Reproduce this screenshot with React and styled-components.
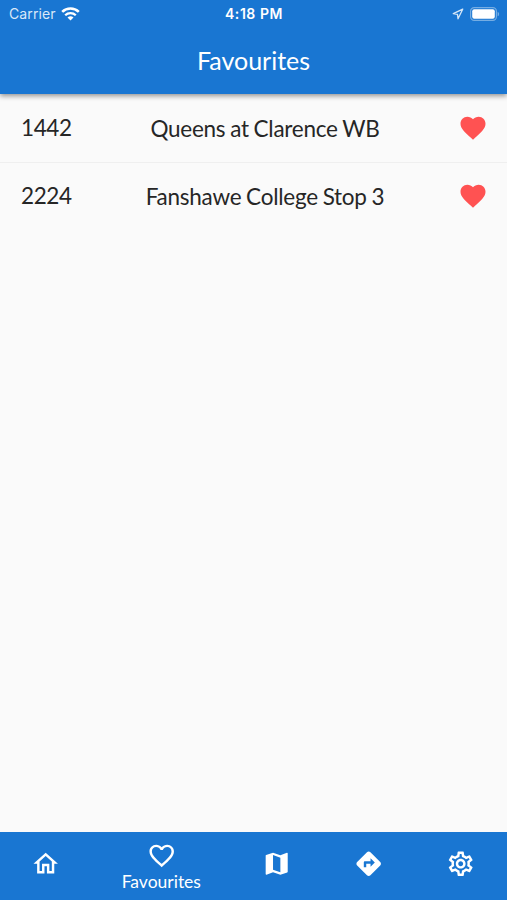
import React from "react";
import styled, { createGlobalStyle } from "styled-components";
import {
  MdDirections,
  MdFavorite,
  MdFavoriteBorder,
  MdMap,
  MdOutlineHome,
  MdOutlineSettings,
} from "react-icons/md";

const stops = [
  { number: "1442", name: "Queens at Clarence WB" },
  { number: "2224", name: "Fanshawe College Stop 3" },
];

const tabs = [
  { id: "home", icon: MdOutlineHome },
  { id: "favourites", icon: MdFavoriteBorder, label: "Favourites" },
  { id: "map", icon: MdMap },
  { id: "directions", icon: MdDirections },
  { id: "settings", icon: MdOutlineSettings },
];

const WifiIcon = () => (
  <svg width="19" height="14" viewBox="0 0 19 14" fill="none">
    <path d="M1.2 4.9a12 12 0 0 1 16.6 0" stroke="#fff" strokeWidth="2.6" />
    <path d="M4.2 8.2a7.6 7.6 0 0 1 10.6 0" stroke="#fff" strokeWidth="2.3" />
    <path d="M6.5 10.6a4.3 4.3 0 0 1 6 0l-3 3z" fill="#fff" />
  </svg>
);

const LocationIcon = () => (
  <svg width="12" height="12" viewBox="0 0 12 12" fill="none">
    <path
      d="M10.7 1.2 1.3 5.7l4.2.7.5 4.4z"
      stroke="#d5e6f7"
      strokeWidth="1.3"
      strokeLinejoin="round"
    />
  </svg>
);

const BatteryIcon = () => (
  <svg width="30" height="14" viewBox="0 0 30 14">
    <rect x="0.6" y="0.6" width="25.8" height="12.8" rx="3.6" fill="none" stroke="#75ade3" strokeWidth="1.2" />
    <rect x="2.2" y="2.2" width="22.6" height="9.6" rx="2" fill="#fff" />
    <path d="M27.6 4.7c2 .8 2 3.8 0 4.6z" fill="#75ade3" />
  </svg>
);

const App = () => {
  return (
    <Screen>
      <GlobalStyle />
      <Header>
        <StatusBar>
          <Carrier>
            Carrier
            <WifiIcon />
          </Carrier>
          <Clock>4:18 PM</Clock>
          <StatusIcons>
            <LocationIcon />
            <BatteryIcon />
          </StatusIcons>
        </StatusBar>
        <Title>Favourites</Title>
      </Header>
      <StopList>
        {stops.map((stop) => (
          <StopRow key={stop.number}>
            <StopNumber>{stop.number}</StopNumber>
            <StopName>{stop.name}</StopName>
            <HeartButton aria-label="Remove favourite">
              <MdFavorite size={30} />
            </HeartButton>
          </StopRow>
        ))}
      </StopList>
      <NavBar>
        {tabs.map(({ id, icon: Icon, label }) => (
          <NavItem key={id} $active={Boolean(label)}>
            <Icon size={29.4} />
            {label && <NavLabel>{label}</NavLabel>}
          </NavItem>
        ))}
      </NavBar>
    </Screen>
  );
};

const GlobalStyle = createGlobalStyle`
  * {
    box-sizing: border-box;
  }
  body {
    margin: 0;
  }
  svg {
    display: block;
    flex-shrink: 0;
  }
`;

const Screen = styled.div`
  display: flex;
  flex-direction: column;
  width: 507px;
  height: 900px;
  overflow: hidden;
  background: #fafafa;
  font-family: Lato, sans-serif;
`;

const Header = styled.header`
  z-index: 1;
  height: 93.5px;
  background: #1976d2;
  color: #fff;
  box-shadow: 0 2px 5px rgba(0, 0, 0, 0.42);
`;

const StatusBar = styled.div`
  display: grid;
  grid-template-columns: 1fr auto 1fr;
  align-items: center;
  height: 26px;
  padding: 1px 7px 0 9px;
  font-family: Inter, sans-serif;
  font-size: 14px;
`;

const Carrier = styled.div`
  display: flex;
  align-items: center;
  gap: 5px;
  color: #d9e8f8;
  letter-spacing: 0.1px;
`;

const Clock = styled.div`
  margin-left: -1px;
  font-size: 14px;
  font-weight: 600;
  letter-spacing: 0.55px;
`;

const StatusIcons = styled.div`
  display: flex;
  align-items: center;
  justify-content: flex-end;
  gap: 6px;
`;

const Title = styled.h1`
  margin: 0;
  font-size: 25px;
  font-weight: 400;
  line-height: 68px;
  text-align: center;
`;

const StopList = styled.main`
  flex: 1;
`;

const StopRow = styled.div`
  display: flex;
  align-items: center;
  height: 68px;
  padding: 0 19px 0 21px;
  color: #262626;
  font-size: 22.5px;
  letter-spacing: -0.25px;
  word-spacing: -0.7px;

  & + & {
    border-top: 1px solid #efefef;
  }
`;

const StopNumber = styled.div`
  width: 51px;
  padding-bottom: 1px;
  letter-spacing: -0.4px;
`;

const StopName = styled.div`
  flex: 1;
  padding-top: 1px;
  text-align: center;
`;

const HeartButton = styled.button`
  padding: 0;
  border: 0;
  background: none;
  color: #ff5252;
`;

const NavBar = styled.nav`
  display: flex;
  height: 68.5px;
  background: #1976d2;
  color: #fff;
`;

const NavItem = styled.div`
  flex: ${(props) => (props.$active ? 1.5 : 1)} 1 0;
  display: flex;
  flex-direction: column;
  align-items: center;
  justify-content: ${(props) => (props.$active ? "flex-start" : "center")};
  padding-top: ${(props) => (props.$active ? "9px" : "0")};
  padding-bottom: ${(props) => (props.$active ? "0" : "4px")};
`;

const NavLabel = styled.span`
  font-size: 17.5px;
  line-height: 24px;
`;

export default App;
